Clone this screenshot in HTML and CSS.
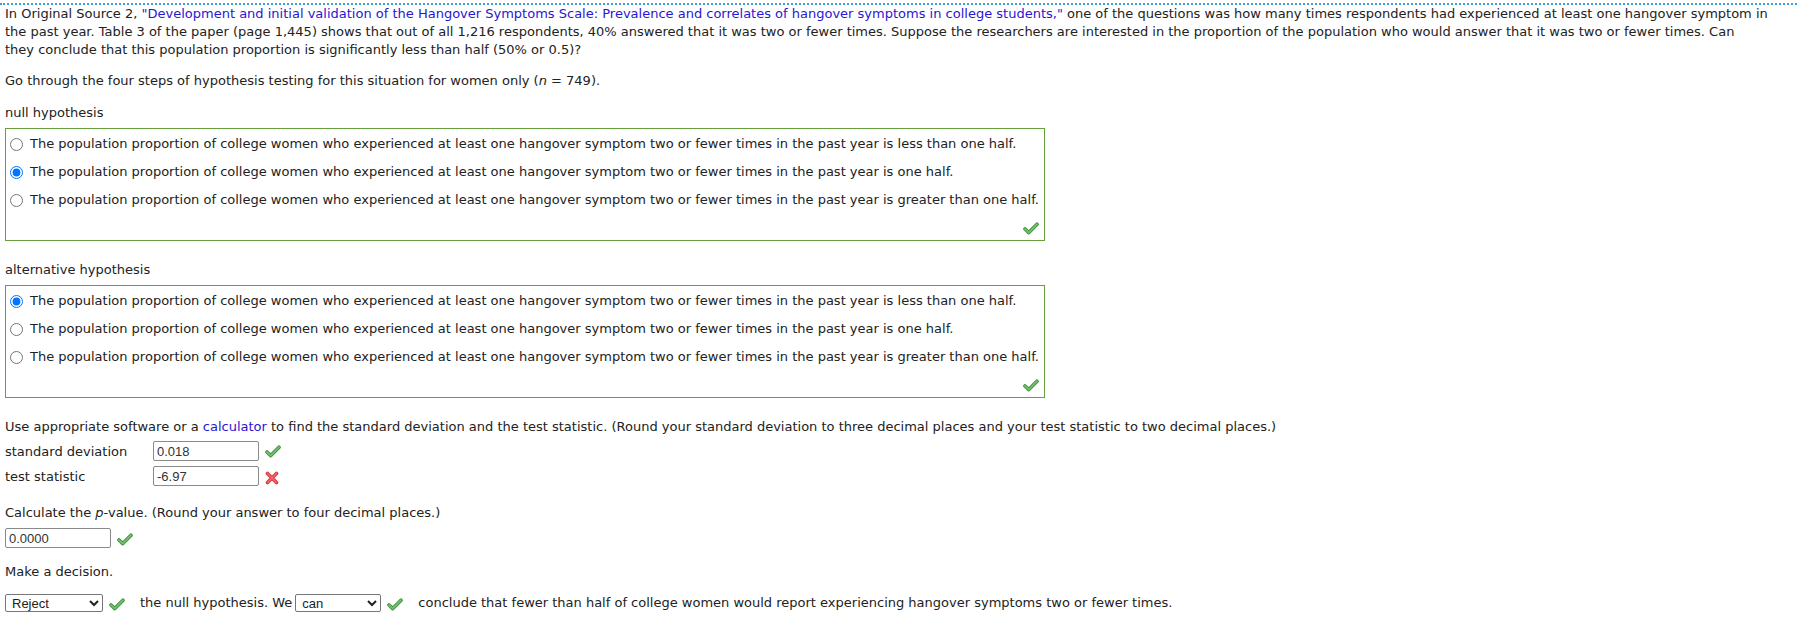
FILE: index.html
```html
<!DOCTYPE html>
<html lang="en">
<head>
<meta charset="utf-8">
<title>Hypothesis testing</title>
<link rel="stylesheet" href="styles.css">
</head>
<body>
<div class="page">
  <p class="intro">In Original Source 2, <a class="link" href="#">"Development and initial validation of the Hangover Symptoms Scale: Prevalence and correlates of hangover symptoms in college students,"</a> one of the questions was how many times respondents had experienced at least one hangover symptom in the past year. Table 3 of the paper (page 1,445) shows that out of all 1,216 respondents, 40% answered that it was two or fewer times. Suppose the researchers are interested in the proportion of the population who would answer that it was two or fewer times. Can<br>they conclude that this population proportion is significantly less than half (50% or 0.5)?</p>

  <p class="para steps">Go through the four steps of hypothesis testing for this situation for women only (<i>n</i> = 749).</p>

  <div class="label">null hypothesis</div>
  <div class="choices">
    <label class="choice"><input type="radio" name="h0"><span>The population proportion of college women who experienced at least one hangover symptom two or fewer times in the past year is less than one half.</span></label>
    <label class="choice"><input type="radio" name="h0" checked><span>The population proportion of college women who experienced at least one hangover symptom two or fewer times in the past year is one half.</span></label>
    <label class="choice"><input type="radio" name="h0"><span>The population proportion of college women who experienced at least one hangover symptom two or fewer times in the past year is greater than one half.</span></label>
    <div class="choice-mark">
      <svg class="ok" width="16" height="13" viewBox="0 0 16 13"><path d="M2 7 L5.8 10.6 L14 2.2" fill="none" stroke="#3f8f3f" stroke-width="3.6" stroke-linecap="round" stroke-linejoin="round"/><path d="M2 7 L5.8 10.6 L14 2.2" fill="none" stroke="#74c06c" stroke-width="1.8" stroke-linecap="round" stroke-linejoin="round"/></svg>
    </div>
  </div>

  <div class="label label-alt">alternative hypothesis</div>
  <div class="choices">
    <label class="choice"><input type="radio" name="ha" checked><span>The population proportion of college women who experienced at least one hangover symptom two or fewer times in the past year is less than one half.</span></label>
    <label class="choice"><input type="radio" name="ha"><span>The population proportion of college women who experienced at least one hangover symptom two or fewer times in the past year is one half.</span></label>
    <label class="choice"><input type="radio" name="ha"><span>The population proportion of college women who experienced at least one hangover symptom two or fewer times in the past year is greater than one half.</span></label>
    <div class="choice-mark">
      <svg class="ok" width="16" height="13" viewBox="0 0 16 13"><path d="M2 7 L5.8 10.6 L14 2.2" fill="none" stroke="#3f8f3f" stroke-width="3.6" stroke-linecap="round" stroke-linejoin="round"/><path d="M2 7 L5.8 10.6 L14 2.2" fill="none" stroke="#74c06c" stroke-width="1.8" stroke-linecap="round" stroke-linejoin="round"/></svg>
    </div>
  </div>

  <p class="para use">Use appropriate software or a <a class="link" href="#">calculator</a> to find the standard deviation and the test statistic. (Round your standard deviation to three decimal places and your test statistic to two decimal places.)</p>

  <div class="answers">
    <span class="ans-label">standard deviation</span>
    <input class="field" type="text" value="0.018">
    <svg class="ok" width="16" height="13" viewBox="0 0 16 13"><path d="M2 7 L5.8 10.6 L14 2.2" fill="none" stroke="#3f8f3f" stroke-width="3.6" stroke-linecap="round" stroke-linejoin="round"/><path d="M2 7 L5.8 10.6 L14 2.2" fill="none" stroke="#74c06c" stroke-width="1.8" stroke-linecap="round" stroke-linejoin="round"/></svg>
    <span class="ans-label">test statistic</span>
    <input class="field" type="text" value="-6.97">
    <svg class="bad" width="14" height="14" viewBox="0 0 14 14"><path d="M2.5 2.5 L11.5 11.5 M11.5 2.5 L2.5 11.5" fill="none" stroke="#d8343a" stroke-width="3.6" stroke-linecap="round"/><path d="M2.5 2.5 L11.5 11.5 M11.5 2.5 L2.5 11.5" fill="none" stroke="#f46a6e" stroke-width="1.6" stroke-linecap="round"/></svg>
  </div>

  <p class="para calc">Calculate the <i>p</i>-value. (Round your answer to four decimal places.)</p>
  <div class="pval">
    <input class="field" type="text" value="0.0000">
    <svg class="ok" width="16" height="13" viewBox="0 0 16 13"><path d="M2 7 L5.8 10.6 L14 2.2" fill="none" stroke="#3f8f3f" stroke-width="3.6" stroke-linecap="round" stroke-linejoin="round"/><path d="M2 7 L5.8 10.6 L14 2.2" fill="none" stroke="#74c06c" stroke-width="1.8" stroke-linecap="round" stroke-linejoin="round"/></svg>
  </div>

  <p class="para decide">Make a decision.</p>
  <div class="decision">
    <select class="pick pick-reject"><option>Reject</option><option>Fail to reject</option></select>
    <svg class="ok" width="16" height="13" viewBox="0 0 16 13"><path d="M2 7 L5.8 10.6 L14 2.2" fill="none" stroke="#3f8f3f" stroke-width="3.6" stroke-linecap="round" stroke-linejoin="round"/><path d="M2 7 L5.8 10.6 L14 2.2" fill="none" stroke="#74c06c" stroke-width="1.8" stroke-linecap="round" stroke-linejoin="round"/></svg>
    <span class="dtext">the null hypothesis. We</span>
    <select class="pick pick-can"><option>can</option><option>cannot</option></select>
    <svg class="ok" width="16" height="13" viewBox="0 0 16 13"><path d="M2 7 L5.8 10.6 L14 2.2" fill="none" stroke="#3f8f3f" stroke-width="3.6" stroke-linecap="round" stroke-linejoin="round"/><path d="M2 7 L5.8 10.6 L14 2.2" fill="none" stroke="#74c06c" stroke-width="1.8" stroke-linecap="round" stroke-linejoin="round"/></svg>
    <span class="dtext dtext-end">conclude that fewer than half of college women would report experiencing hangover symptoms two or fewer times.</span>
  </div>
</div>
</body>
</html>
```
FILE: styles.css
```css
html, body {
  margin: 0;
  padding: 0;
  background: #ffffff;
}

body {
  font-family: "DejaVu Sans", Verdana, sans-serif;
  font-size: 13px;
  color: #222222;
}

.page {
  margin-top: 3px;
  border-top: 2px dotted #3c9de0;
  padding: 0 5px;
}

.intro {
  margin: 0;
  line-height: 18px;
}

.link {
  color: #2a16d2;
  text-decoration: none;
}

.para {
  margin: 0;
  line-height: 18px;
}

.steps { margin-top: 13px; }

.label {
  line-height: 18px;
  margin-top: 14px;
}

.label-alt { margin-top: 20px; }

.choices {
  margin-top: 6px;
  width: fit-content;
  border: 1px solid #66a03c;
  padding: 1px 5px 0 0;
}

.choice {
  display: flex;
  align-items: center;
  height: 28px;
  white-space: nowrap;
  line-height: 18px;
}

.choice input {
  width: 13px;
  height: 13px;
  margin: 0 7px 0 4px;
  flex: none;
}

.choice-mark {
  height: 26px;
  display: flex;
  justify-content: flex-end;
  align-items: flex-start;
  padding-top: 8px;
  box-sizing: border-box;
}

.use { margin-top: 20px; }

.answers {
  margin-top: 5px;
  display: grid;
  grid-template-columns: 148px 106px auto;
  grid-auto-rows: 20px;
  row-gap: 5px;
  align-items: center;
  justify-content: start;
}

.answers svg { margin-left: 6px; }
.answers .bad { margin-top: 4px; }

.field {
  box-sizing: border-box;
  width: 106px;
  height: 20px;
  margin: 0;
  padding: 0 3px;
  border: 1px solid #8a8a8a;
  border-radius: 2px;
  font-family: "Liberation Sans", Arial, sans-serif;
  font-size: 13px;
  color: #333333;
  background: #ffffff;
}

.calc { margin-top: 18px; }

.pval {
  margin-top: 6px;
  display: flex;
  align-items: center;
}

.pval svg { margin-left: 6px; margin-top: 2px; }

.decide { margin-top: 15px; }

.decision {
  margin-top: 13px;
  display: flex;
  align-items: center;
  white-space: nowrap;
  line-height: 18px;
}

.pick {
  box-sizing: border-box;
  height: 18px;
  margin: 0;
  font-family: "Liberation Sans", Arial, sans-serif;
  font-size: 13px;
  color: #222222;
  border: 1px solid #767676;
  border-radius: 2px;
  background: #ffffff;
  padding: 0 0 0 2px;
}

.pick-reject { width: 98px; }
.pick-can { width: 86px; }

.decision .ok { margin-left: 6px; margin-top: 3px; }

.dtext { margin-left: 15px; margin-right: 3px; }
.dtext-end { margin-left: 15px; }
```
